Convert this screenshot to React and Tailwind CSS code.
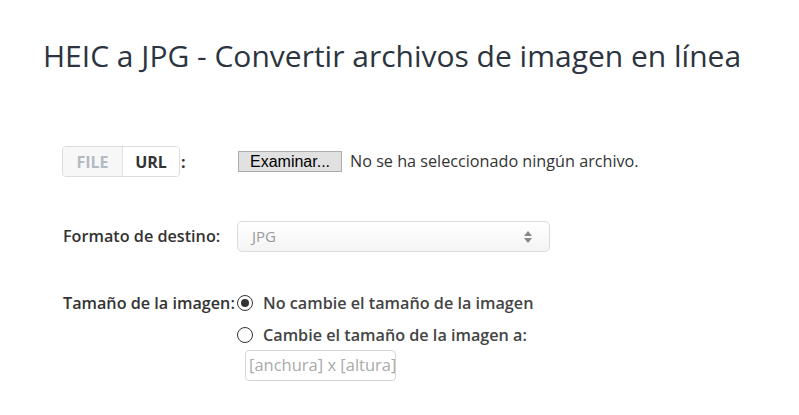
import React from "react";

export default function App() {
  return (
    <div className="w-[799px] h-[415px] bg-white overflow-hidden" style={{ fontFamily: '"Open Sans", sans-serif' }}>
      <h1 className="pl-[43px] pt-[35px] text-[30px] leading-[42px] text-[#2c3440] font-normal">
        HEIC a JPG - Convertir archivos de imagen en línea
      </h1>
      <div className="pl-[62px] mt-[69px]">
        <div className="flex items-center h-[31px]">
          <div className="w-[176px] flex items-center">
            <div className="flex h-[31px] border border-[#dcdcdc] rounded-[4px] overflow-hidden text-[16px] font-bold">
              <div className="w-[60px] flex items-center justify-center bg-[#f7f7f7] text-[#b3bac2] border-r border-[#e2e2e2]">FILE</div>
              <div className="w-[56px] flex items-center justify-center bg-white text-[#333]">URL</div>
            </div>
            <span className="ml-[1px] text-[16px] text-[#333] font-bold">:</span>
          </div>
          <button
            className="h-[21px] w-[104px] bg-[#e1e1e1] border border-[#adadad] text-[16px] text-black leading-none flex items-center justify-center"
            style={{ fontFamily: '"Liberation Sans", Arial, sans-serif' }}
          >
            Examinar...
          </button>
          <span className="ml-[8px] text-[16.2px] text-[#333]">No se ha seleccionado ningún archivo.</span>
        </div>

        <div className="flex items-center mt-[44px] h-[31px]">
          <div className="w-[175px] text-[16.2px] font-semibold text-[#333] pl-px whitespace-nowrap">Formato de destino:</div>
          <div className="w-[313px] h-[31px] border border-[#dcdcdc] rounded-[5px] bg-gradient-to-b from-white to-[#f4f4f4] flex items-center justify-between pl-[14px] pr-[17px]">
            <span className="text-[15px] text-[#9a9a9a]">JPG</span>
            <svg width="8" height="12" viewBox="0 0 8 12">
              <path d="M4 0 L8 5 L0 5 Z" fill="#888" />
              <path d="M4 12 L8 7 L0 7 Z" fill="#888" />
            </svg>
          </div>
        </div>

        <div className="flex mt-[39px]">
          <div className="w-[175px] text-[16.2px] font-semibold text-[#333] pl-px leading-[24px] whitespace-nowrap">Tamaño de la imagen:</div>
          <div className="flex flex-col">
            <label className="flex items-center h-[24px]">
              <span className="w-[16px] h-[16px] rounded-full border border-[#333] flex items-center justify-center">
                <span className="w-[8px] h-[8px] rounded-full bg-[#333]"></span>
              </span>
              <span className="ml-[10px] text-[16.2px] font-semibold text-[#444]">No cambie el tamaño de la imagen</span>
            </label>
            <label className="flex items-center h-[24px] mt-[8px]">
              <span className="w-[16px] h-[16px] rounded-full border border-[#333]"></span>
              <span className="ml-[10px] text-[16.2px] font-semibold text-[#444]">Cambie el tamaño de la imagen a:</span>
            </label>
            <div className="ml-[8px] mt-[3px] w-[151px] h-[31px] border border-[#d6d6d6] rounded-[4px] flex items-center pl-[3px] overflow-hidden">
              <span className="text-[16.5px] text-[#aaa] whitespace-nowrap">[anchura] x [altura]</span>
            </div>
          </div>
        </div>
      </div>
    </div>
  );
}
